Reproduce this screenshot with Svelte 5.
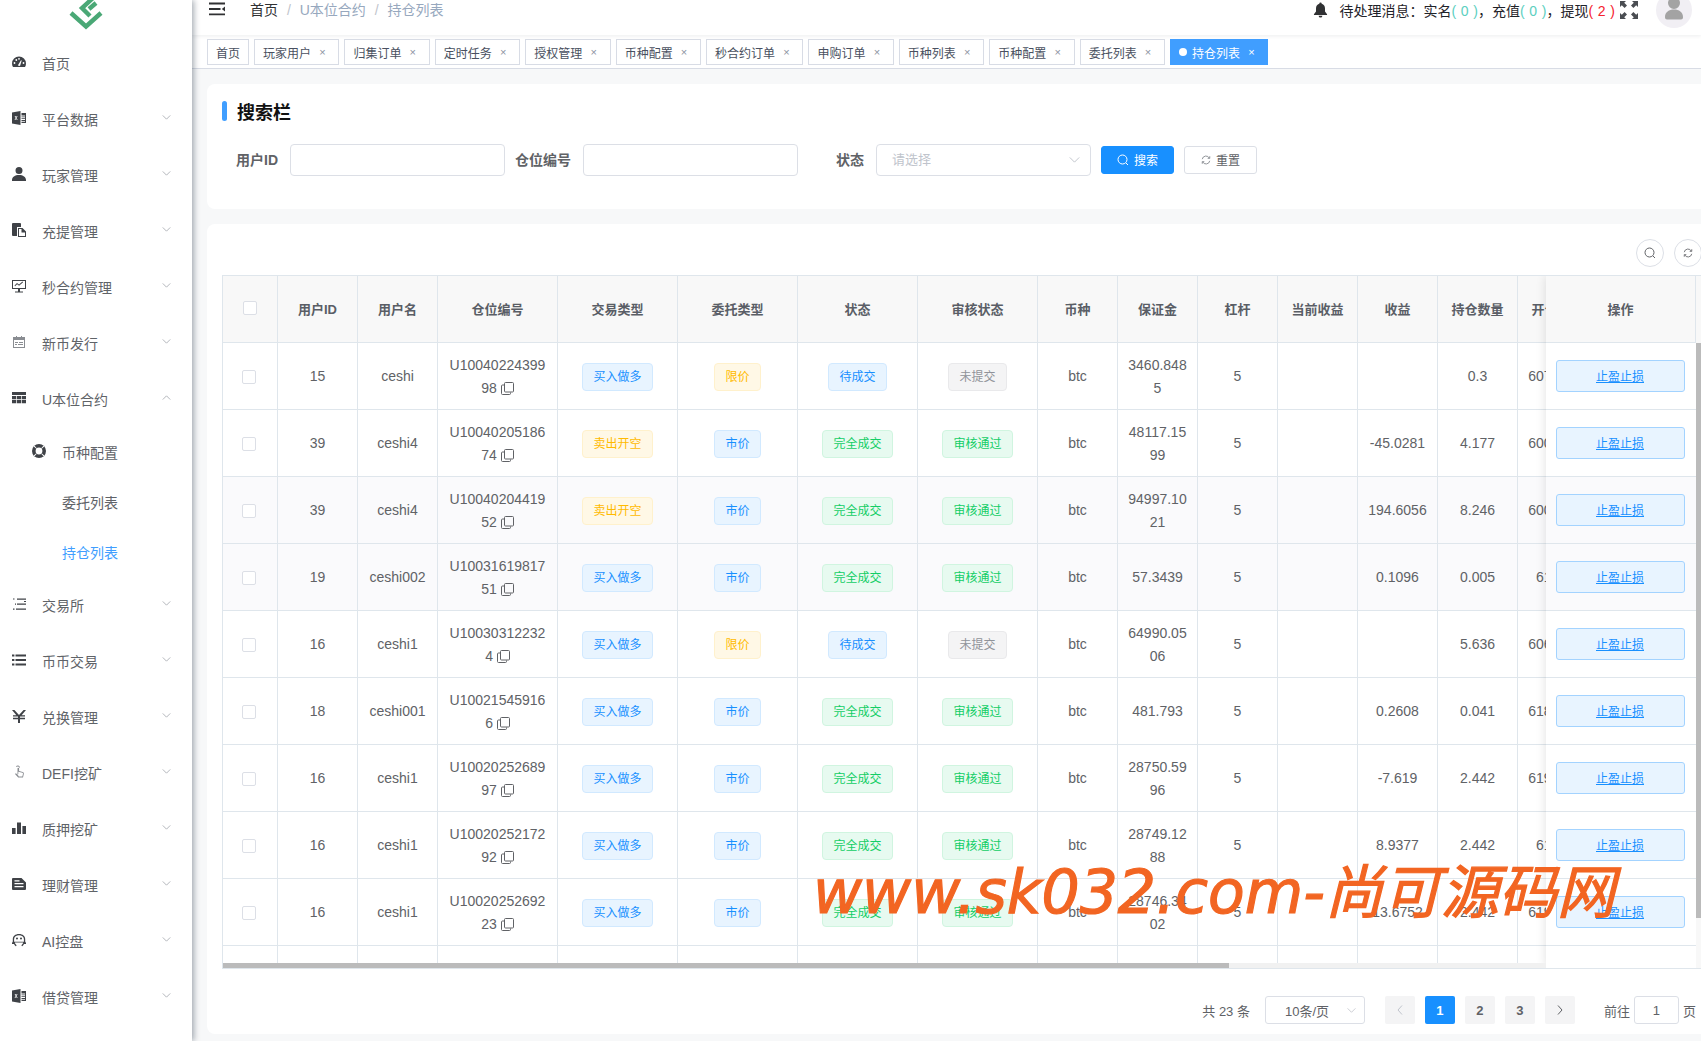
<script>
	// sidebar icons, all drawn on a 14x14 box
	const icons = {
		dash: 'M7 1.5A7 7 0 0 0 0 8.5c0 1.4.4 2.6 1 3.5h12c.6-.9 1-2.1 1-3.5a7 7 0 0 0-7-7zM1.6 8a.9.9 0 1 0 1.8 0a.9.9 0 1 0-1.8 0zM3.4 5a.9.9 0 1 0 1.8 0a.9.9 0 1 0-1.8 0zM6.1 3.8a.9.9 0 1 0 1.8 0a.9.9 0 1 0-1.8 0zM10.6 8a.9.9 0 1 0 1.8 0a.9.9 0 1 0-1.8 0zM5.8 10.5L9 5.2l.7.4L8 11z',
		excel: 'M0 1.5L8.5 0v14L0 12.5zM2.6 5l1.1 1.9-1.2 2.1h.9l.7-1.4.7 1.4h.9L4.500 6.900 5.600 5h-.9l-.6 1.300L3.500 5zM9.500 2H14v10H9.500v-1.200H13V9.900H9.500V9H13v-.9H9.500v-.9H13v-.9H9.500v-.9H13v-.9H9.500z',
		user: 'M3.5 3.5a3.5 3.5 0 1 0 7 0a3.5 3.5 0 1 0-7 0zM0 13c0-3 3-5 7-5s7 2 7 5v1H0z',
		paste: 'M0 1a1 1 0 0 1 1-1h7a1 1 0 0 1 1 1v3H5v9H1a1 1 0 0 1-1-1zM6 5h4.5L14 8.5V14H6zM7 6v7h6V9.5h-3.5V6z',
		board: 'M0 1h14v9H8v2.5h3v1H3v-1h3V10H0zM1 2v7h12V2zM2.5 6.5l2.5-2.5 2 1.5 3.5-3 .6.7-4 3.5-2-1.5-2 2z',
		calendar: 'M1 2h3V1h1v1h4V1h1v1h3v11H1zM2 5v7h10V5zM3 7h3v1H3zM7 7h4v1H7zM3 9h2v1H3zM6 9h5v1H6z',
		table: 'M0 1h14v3H0zM0 5h4.3v3.2H0zM5 5h4v3.2H5zM9.7 5H14v3.2H9.7zM0 9h4.3v3.2H0zM5 9h4v3.2H5zM9.7 9H14v3.2H9.7z',
		ring: 'M7 0a7 7 0 1 0 0 14a7 7 0 1 0 0-14zM7 3.6a3.4 3.4 0 1 1 0 6.8a3.4 3.4 0 1 1 0-6.8zM1.500 2.300L2.300 1.500 4.600 4 4 4.600zM12.500 2.300L11.700 1.500 9.400 4 10 4.600zM1.500 11.700L2.300 12.500 4.600 10 4 9.400zM12.500 11.700L11.700 12.500 9.400 10 10 9.400z',
		listDots: 'M1 1.5h1.5v1H1zM5 1.5h9v1.2H5zM5 6.5h9v1.2H5zM3 6.5h1v1.2H3zM1 11.5h1.5v1.2H1zM4 11.5h10v1.2H4zM12 4h2v1h-2z',
		list: 'M0 1.5h2.4v2H0zM3.5 1.5H14v2H3.5zM0 6h2.4v2H0zM3.5 6H14v2H3.5zM0 10.5h2.4v2H0zM3.5 10.5H14v2H3.5z',
		yen: 'M0 1h2.4L7 6l4.6-5H14L9.6 6.2H13v1.4H8v1.2h5v1.4H8V14H6v-3.8H1V8.8h5V7.6H1V6.2h3.4z',
		hand: 'M4 1.5a2.2 2.2 0 0 1 4 1l-.8.2a1.4 1.4 0 0 0-2.6-.6zM5.5 3.5a.8.8 0 0 1 1.6 0V6l3.6 1c.9.3 1.3 1 1.1 1.900L11 12.500H6.200L3 9l.8-.8 1.700 1.200zM6.300 4.300v5l-1.300-1 1.800 3.300h3.500l.7-2.900c.1-.5-.1-.8-.6-1L6.300 6.700z',
		bars: 'M0 7h3.6v6H0zM5 1.5h4V13H5zM10.4 5H14v8h-3.6z',
		file: 'M1 1h8.5L14 5.5V12a1 1 0 0 1-1 1H1a1 1 0 0 1-1-1V2a1 1 0 0 1 1-1zM2.5 6v1.3h9V6zM2.5 9v1.3h9V9zM2.5 3.2v1.3h5V3.2z',
		robot: 'M7 1C3.2 1 .8 3.200.8 6v2.500L0 10v1h2c.6 1.400 2 2.300 2 2.300l.6-1-1.700-2v-.9h8.200v.9l-1.700 2 .6 1s1.400-.9 2-2.300h2v-1l-.8-1.500V6C13.200 3.200 10.800 1 7 1zM2.100 8.800V6c0-2 2.200-3.700 4.900-3.700s4.900 1.700 4.900 3.700v2.800zM4 5.500a1 1 0 1 0 2 0a1 1 0 1 0-2 0zM8 5.500a1 1 0 1 0 2 0a1 1 0 1 0-2 0z'
	};

	const menu = [
		{ name: '首页', icon: 'dash', noArrow: true },
		{ name: '平台数据', icon: 'excel' },
		{ name: '玩家管理', icon: 'user' },
		{ name: '充提管理', icon: 'paste' },
		{ name: '秒合约管理', icon: 'board' },
		{ name: '新币发行', icon: 'calendar', light: true },
		{
			name: 'U本位合约',
			icon: 'table',
			open: true,
			children: [
				{ name: '币种配置', icon: 'ring' },
				{ name: '委托列表' },
				{ name: '持仓列表', active: true }
			]
		},
		{ name: '交易所', icon: 'listDots' },
		{ name: '币币交易', icon: 'list' },
		{ name: '兑换管理', icon: 'yen' },
		{ name: 'DEFI挖矿', icon: 'hand', light: true },
		{ name: '质押挖矿', icon: 'bars' },
		{ name: '理财管理', icon: 'file' },
		{ name: 'AI控盘', icon: 'robot' },
		{ name: '借贷管理', icon: 'excel' }
	];

	const tags = ['玩家用户', '归集订单', '定时任务', '授权管理', '币种配置', '秒合约订单', '申购订单', '币种列表', '币种配置', '委托列表'];

	const columns = [
		{ label: '用户ID', w: 80 },
		{ label: '用户名', w: 80 },
		{ label: '仓位编号', w: 120 },
		{ label: '交易类型', w: 120 },
		{ label: '委托类型', w: 120 },
		{ label: '状态', w: 120 },
		{ label: '审核状态', w: 120 },
		{ label: '币种', w: 80 },
		{ label: '保证金', w: 80 },
		{ label: '杠杆', w: 80 },
		{ label: '当前收益', w: 80 },
		{ label: '收益', w: 80 },
		{ label: '持仓数量', w: 80 },
		{ label: '开仓价格', w: 80 }
	];

	const buy = { text: '买入做多', kind: 'blue' };
	const sell = { text: '卖出开空', kind: 'orange' };
	const limit = { text: '限价', kind: 'orange' };
	const market = { text: '市价', kind: 'blue' };
	const pending = { text: '待成交', kind: 'blue' };
	const done = { text: '完全成交', kind: 'green' };
	const unsent = { text: '未提交', kind: 'gray' };
	const passed = { text: '审核通过', kind: 'green' };

	const rows = [
		{ uid: 15, name: 'ceshi', no: 'U1004022439998', side: buy, type: limit, state: pending, audit: unsent, margin: '3460.8485', gain: '', qty: '0.3', price: '60755.21' },
		{ uid: 39, name: 'ceshi4', no: 'U1004020518674', side: sell, type: market, state: done, audit: passed, margin: '48117.1599', gain: '-45.0281', qty: '4.177', price: '60012.34' },
		{ uid: 39, name: 'ceshi4', no: 'U1004020441952', side: sell, type: market, state: done, audit: passed, margin: '94997.1021', gain: '194.6056', qty: '8.246', price: '60043.12', tint: true },
		{ uid: 19, name: 'ceshi002', no: 'U1003161981751', side: buy, type: market, state: done, audit: passed, margin: '57.3439', gain: '0.1096', qty: '0.005', price: '6123.4', tint: true },
		{ uid: 16, name: 'ceshi1', no: 'U100303122324', side: buy, type: limit, state: pending, audit: unsent, margin: '64990.0506', gain: '', qty: '5.636', price: '60600.52' },
		{ uid: 18, name: 'ceshi001', no: 'U100215459166', side: buy, type: market, state: done, audit: passed, margin: '481.793', gain: '0.2608', qty: '0.041', price: '61824.73' },
		{ uid: 16, name: 'ceshi1', no: 'U1002025268997', side: buy, type: market, state: done, audit: passed, margin: '28750.5996', gain: '-7.619', qty: '2.442', price: '61943.91' },
		{ uid: 16, name: 'ceshi1', no: 'U1002025217292', side: buy, type: market, state: done, audit: passed, margin: '28749.1288', gain: '8.9377', qty: '2.442', price: '6193.9' },
		{ uid: 16, name: 'ceshi1', no: 'U1002025269223', side: buy, type: market, state: done, audit: passed, margin: '28746.3402', gain: '13.6752', qty: '2.442', price: '61936.24' },
		{ uid: 16, name: 'ceshi1', no: 'U1002025144412', side: buy, type: market, state: done, audit: passed, margin: '28770.4312', gain: '-100.343', qty: '2.442', price: '61922.47' }
	];
</script>

<div class="layout">
	<aside class="sidebar">
		<div class="logo">
			<svg width="36" height="30" viewBox="0 0 36 30">
				<g fill="none" stroke="#4aa876" stroke-width="4.4">
					<polyline points="3,13 18,26.5 33,13" />
					<polyline points="25,-2 14,8 22,16" />
					<polyline points="28,3 21,9" />
				</g>
			</svg>
		</div>
		{#each menu as item}
			<div class="menu-item">
				<svg class="menu-icon" class:light={item.light} viewBox="0 0 14 14"><path fill-rule="evenodd" d={icons[item.icon]} /></svg>
				<span>{item.name}</span>
				{#if !item.noArrow}
					<svg class="arrow" viewBox="0 0 10 6">
						<polyline points={item.open ? '0.5,5.5 5,1 9.5,5.5' : '0.5,0.5 5,5 9.5,0.5'} />
					</svg>
				{/if}
			</div>
			{#if item.children}
				{#each item.children as sub}
					<div class="sub-item" class:active={sub.active}>
						<span class="sub-slot">
							{#if sub.icon}
								<svg class="menu-icon" viewBox="0 0 14 14"><path fill-rule="evenodd" d={icons[sub.icon]} /></svg>
							{/if}
						</span>
						<span>{sub.name}</span>
					</div>
				{/each}
			{/if}
		{/each}
	</aside>

	<main class="main">
		<header class="navbar">
			<svg class="hamburger" viewBox="0 0 16 14">
				<path d="M0 .6h16v1.900H0zM0 6h11.500v1.900H0zM0 11.400h16v1.900H0zM16 4.500v5L12.800 7z" />
			</svg>
			<div class="crumbs">
				<span class="crumb-home">首页</span>
				<span class="sep">/</span>
				<span>U本位合约</span>
				<span class="sep">/</span>
				<span>持仓列表</span>
			</div>
			<div class="nav-right">
				<svg class="bell" viewBox="0 0 16 16">
					<path d="M8 0a1.3 1.3 0 0 1 1.3 1.3c2.3.6 3.5 2.5 3.5 5v3.2L15 12.4v.8H1v-.8l2.2-2.9V6.3c0-2.5 1.2-4.4 3.5-5A1.3 1.3 0 0 1 8 0zM6 14h4a2 2 0 0 1-4 0z" />
				</svg>
				<div class="notice">
					待处理消息：实名<span class="teal">( 0 )</span>，充值<span class="teal">( 0 )</span>，提现<span class="red">( 2 )</span>
				</div>
				<svg class="full" viewBox="0 0 18 18">
					<path d="M0 0h6L4.2 1.8 7 4.6 4.6 7 1.8 4.2 0 6zM18 0v6l-1.8-1.8L13.4 7 11 4.6l2.8-2.8L12 0zM0 18v-6l1.8 1.8L4.6 11 7 13.4l-2.8 2.8L6 18zM18 18h-6l1.8-1.8L11 13.4l2.4-2.4 2.8 2.8L18 12z" />
				</svg>
				<div class="avatar">
					<svg viewBox="0 0 36 36" width="36" height="36">
						<path fill="#a3a3a3" d="M12 11a6 6 0 1 0 12 0a6 6 0 1 0-12 0zM9 25c0-5 4-7.500 9-7.500s9 2.500 9 7.500v.5a2 2 0 0 1-2 2H11a2 2 0 0 1-2-2z" />
					</svg>
				</div>
			</div>
		</header>

		<div class="tags">
			<span class="tag">首页</span>
			{#each tags as t}
				<span class="tag">{t}<i class="close">×</i></span>
			{/each}
			<span class="tag current"><b class="dot"></b>持仓列表<i class="close">×</i></span>
		</div>

		<div class="content">
			<section class="card search">
				<h3 class="title">搜索栏</h3>
				<div class="form">
					<label class="field">
						<span class="label">用户ID</span>
						<span class="input"></span>
					</label>
					<label class="field">
						<span class="label">仓位编号</span>
						<span class="input"></span>
					</label>
					<label class="field">
						<span class="label">状态</span>
						<span class="input select">
							<span class="placeholder">请选择</span>
							<svg class="caret" viewBox="0 0 12 7"><polyline points="0.5,0.5 6,6 11.5,0.5" /></svg>
						</span>
					</label>
					<button class="btn primary">
						<svg class="btn-icon" viewBox="0 0 12 12"><circle cx="5.5" cy="5.5" r="4.5" /><line x1="9" y1="9" x2="11" y2="11" /></svg>
						搜索
					</button>
					<button class="btn">
						<svg class="btn-icon small" viewBox="0 0 12 12"><path d="M1.500 5A4.500 4.500 0 0 1 10 3.800M10.500 7A4.500 4.500 0 0 1 2 8.200" /><path d="M10.500 1.500V4H8M1.500 10.500V8H4" /></svg>
						重置
					</button>
				</div>
			</section>

			<section class="card list">
				<div class="toolbar">
					<span class="round">
						<svg class="btn-icon dark" viewBox="0 0 12 12"><circle cx="5.5" cy="5.500" r="4.500" /><line x1="9" y1="9" x2="11" y2="11" /></svg>
					</span>
					<span class="round">
						<svg class="btn-icon dark small" viewBox="0 0 12 12"><path d="M1.500 5A4.500 4.500 0 0 1 10 3.800M10.500 7A4.500 4.500 0 0 1 2 8.200" /><path d="M10.500 1.500V4H8M1.500 10.500V8H4" /></svg>
					</span>
				</div>

				<div class="table-wrap">
					<table>
						<colgroup>
							<col style="width: 55px" />
							{#each columns as c}
								<col style="width: {c.w}px" />
							{/each}
							<col style="width: 150px" />
						</colgroup>
						<thead>
							<tr>
								<th><span class="check head"></span></th>
								{#each columns as c}
									<th>{c.label}</th>
								{/each}
								<th></th>
							</tr>
						</thead>
						<tbody>
							{#each rows as r}
								<tr class:tint={r.tint}>
									<td><span class="check"></span></td>
									<td>{r.uid}</td>
									<td>{r.name}</td>
									<td class="wrap">
										{r.no}
										<svg class="copy" viewBox="0 0 13 13">
											<rect x="3.500" y="0.500" width="9" height="9.500" rx="1" />
											<path d="M3 3H1.500a1 1 0 0 0-1 1v7.500a1 1 0 0 0 1 1h7a1 1 0 0 0 1-1V10.500" />
										</svg>
									</td>
									<td><span class="pill {r.side.kind}">{r.side.text}</span></td>
									<td><span class="pill {r.type.kind}">{r.type.text}</span></td>
									<td><span class="pill {r.state.kind}">{r.state.text}</span></td>
									<td><span class="pill {r.audit.kind}">{r.audit.text}</span></td>
									<td>btc</td>
									<td class="wrap">{r.margin}</td>
									<td>5</td>
									<td></td>
									<td>{r.gain}</td>
									<td>{r.qty}</td>
									<td class="wrap">{r.price}</td>
									<td></td>
								</tr>
							{/each}
						</tbody>
					</table>

					<div class="fixed-col">
						<div class="fixed-head">操作</div>
						{#each rows as r}
							<div class="fixed-row" class:tint={r.tint}>
								<button class="stop">止盈止损</button>
							</div>
						{/each}
					</div>

					<div class="gutter"><div class="v-thumb"></div></div>
					<div class="h-track"><div class="h-thumb"></div></div>
				</div>

				<div class="pager">
					<span class="total">共 23 条</span>
					<span class="size">10条/页
						<svg class="caret small" viewBox="0 0 12 7"><polyline points="0.5,0.5 6,6 11.5,0.5" /></svg>
					</span>
					<span class="page-btn off">
						<svg class="page-arrow" viewBox="0 0 6 10"><polyline points="5,0.5 1,5 5,9.500" /></svg>
					</span>
					<span class="page-btn on">1</span>
					<span class="page-btn">2</span>
					<span class="page-btn">3</span>
					<span class="page-btn">
						<svg class="page-arrow" viewBox="0 0 6 10"><polyline points="1,0.5 5,5 1,9.500" /></svg>
					</span>
					<span class="jump">前往</span>
					<span class="jump-input">1</span>
					<span class="jump-end">页</span>
				</div>
			</section>
		</div>
	</main>

	<div class="watermark">www.sk032.com-<span class="wm-cn">尚可源码网</span></div>
</div>

<style>
	:global(body) {
		margin: 0;
		background: #f7f8f9;
	}

	.layout {
		display: flex;
		position: relative;
		width: 100%;
		height: 1041px;
		overflow: hidden;
		font-family: 'Liberation Sans', 'Noto Sans CJK SC', sans-serif;
		font-size: 14px;
		color: #606266;
	}

	/* sidebar */
	.sidebar {
		flex: 0 0 192px;
		background: #fff;
		box-shadow: 2px 0 6px rgba(0, 21, 41, 0.35);
		position: relative;
		z-index: 3;
	}

	.logo {
		height: 35px;
		display: flex;
		justify-content: center;
		align-items: flex-start;
		overflow: hidden;
		margin-left: -20px;
	}

	.menu-item {
		height: 56px;
		display: flex;
		align-items: center;
		padding: 0 21px 0 12px;
		color: #5f6368;
	}

	.menu-icon {
		width: 14px;
		height: 14px;
		flex: none;
		margin: -2px 16px 0 0;
		fill: #3f4247;
	}

	.menu-icon.light {
		fill: #8a8d92;
	}

	.arrow {
		width: 9px;
		height: 5px;
		margin: -4px 0 0 auto;
		fill: none;
		stroke: #a4a7ad;
		stroke-width: 1;
	}

	.sub-item {
		height: 50px;
		display: flex;
		align-items: center;
		padding-left: 32px;
		color: #5f6368;
	}

	.sub-slot {
		width: 30px;
		display: flex;
	}

	.sub-item.active {
		color: #409eff;
	}

	/* top bar */
	.main {
		flex: 1;
		min-width: 0;
		overflow: hidden;
	}

	.navbar {
		height: 35px;
		display: flex;
		align-items: flex-start;
		padding: 0 9px 0 17px;
		background: #fff;
		box-shadow: 0 1px 4px rgba(0, 21, 41, 0.08);
		position: relative;
		z-index: 1;
		overflow: hidden;
	}

	.hamburger {
		width: 16px;
		height: 14px;
		margin-top: 2px;
		fill: #303133;
	}

	.crumbs {
		margin-left: 25px;
		line-height: 20px;
		color: #97a8be;
	}

	.crumb-home {
		color: #303133;
	}

	.sep {
		margin: 0 5px;
		color: #c0c4cc;
	}

	.nav-right {
		margin-left: auto;
		display: flex;
		align-items: flex-start;
	}

	.bell {
		width: 15px;
		height: 16px;
		margin-top: 2px;
		fill: #303133;
	}

	.notice {
		margin-left: 12px;
		line-height: 22px;
		color: #1f2329;
		white-space: nowrap;
	}

	.teal,
	.red {
		word-spacing: 0.8px;
	}

	.teal {
		color: #5ccfc0;
	}

	.red {
		color: #f5222d;
	}

	.full {
		width: 18px;
		height: 18px;
		margin: 1px 0 0 5px;
		fill: #4a4d52;
	}

	.avatar {
		width: 36px;
		height: 36px;
		margin: -8px 0 0 18px;
		border-radius: 50%;
		background: #f1eff4;
	}

	/* tag strip */
	.tags {
		height: 34px;
		box-sizing: border-box;
		display: flex;
		gap: 5px;
		padding: 4px 0 0 15px;
		background: #fff;
		border-bottom: 1px solid #d8dce5;
		white-space: nowrap;
	}

	.tag {
		height: 26px;
		box-sizing: border-box;
		display: flex;
		align-items: center;
		padding: 0 8px;
		border: 1px solid #d8dce5;
		font-size: 12px;
		color: #495060;
	}

	.close {
		width: 16px;
		margin-left: 3.4px;
		text-align: center;
		font-style: normal;
		font-size: 11px;
		color: #8c93a1;
	}

	.tag.current {
		background: #409eff;
		border-color: #409eff;
		color: #fff;
	}

	.tag.current .close {
		color: #fff;
	}

	.dot {
		width: 8px;
		height: 8px;
		margin-right: 5px;
		border-radius: 50%;
		background: #fff;
	}

	/* page */
	.content {
		width: 1525px;
		box-sizing: border-box;
		padding: 15px 0 0 15px;
		display: flex;
		flex-direction: column;
		gap: 15px;
	}

	.card {
		background: #fff;
		border-radius: 8px;
		padding: 0 15px;
	}

	.search {
		height: 125px;
		box-sizing: border-box;
		padding-top: 17px;
	}

	.title {
		margin: 0;
		height: 20px;
		display: flex;
		align-items: center;
		padding-left: 15px;
		position: relative;
		font-size: 18px;
		font-weight: 700;
		color: #111;
	}

	.title::before {
		content: '';
		position: absolute;
		left: 0;
		top: 0;
		width: 5px;
		height: 20px;
		border-radius: 3px;
		background: #409eff;
	}

	.form {
		display: flex;
		align-items: center;
		gap: 10px;
		margin-top: 23px;
	}

	.field {
		display: flex;
		align-items: center;
	}

	.label {
		width: 68px;
		box-sizing: border-box;
		padding: 0 12px 2px 0;
		text-align: right;
		font-weight: 700;
		color: #606266;
		white-space: nowrap;
	}

	.input {
		width: 215px;
		height: 32px;
		box-sizing: border-box;
		border: 1px solid #dcdfe6;
		border-radius: 4px;
		background: #fff;
	}

	.select {
		display: flex;
		align-items: center;
		justify-content: space-between;
		padding: 0 10px 0 15px;
	}

	.placeholder {
		padding-bottom: 3px;
		font-size: 13px;
		color: #c0c4cc;
	}

	.caret {
		width: 11px;
		height: 6px;
		fill: none;
		stroke: #b8bcc4;
	}

	.btn {
		width: 73px;
		height: 28px;
		display: flex;
		align-items: center;
		justify-content: center;
		gap: 5px;
		padding: 0 0 1px;
		border: 1px solid #dcdfe6;
		border-radius: 3px;
		background: #fff;
		font: inherit;
		font-size: 12px;
		color: #606266;
	}

	.btn.primary {
		background: #1890ff;
		border-color: #1890ff;
		color: #fff;
	}

	.btn-icon {
		width: 12px;
		height: 12px;
		fill: none;
		stroke: currentColor;
		stroke-width: 1;
	}

	.btn-icon.small {
		width: 10px;
		height: 10px;
		color: #7d8187;
	}

	.btn-icon.dark {
		color: #606266;
	}

	/* table */
	.list {
		height: 810px;
		box-sizing: border-box;
		padding-top: 15px;
	}

	.toolbar {
		display: flex;
		justify-content: flex-end;
		gap: 10px;
		height: 28px;
		margin-bottom: 8px;
	}

	.round {
		width: 28px;
		height: 28px;
		box-sizing: border-box;
		display: flex;
		align-items: center;
		justify-content: center;
		border: 1px solid #dcdfe6;
		border-radius: 50%;
	}

	.table-wrap {
		position: relative;
		height: 694px;
		overflow: hidden;
		box-sizing: border-box;
		border-top: 1px solid #dfe6ec;
		border-left: 1px solid #dfe6ec;
		border-bottom: 1px solid #dfe6ec;
	}

	table {
		width: 1525px;
		table-layout: fixed;
		border-collapse: separate;
		border-spacing: 0;
	}

	th,
	td {
		height: 67px;
		box-sizing: border-box;
		padding: 0 10px;
		border-right: 1px solid #dfe6ec;
		border-bottom: 1px solid #dfe6ec;
		text-align: center;
		overflow: hidden;
	}

	th {
		padding-bottom: 2px;
		background: #f8f8f8;
		font-size: 13px;
		font-weight: 700;
		color: #5a5e66;
	}

	td {
		padding-top: 1px;
		line-height: 23px;
		color: #606266;
	}

	.wrap {
		word-break: break-all;
	}

	tr.tint td,
	.fixed-row.tint {
		background: #fafafc;
	}

	.check {
		display: block;
		width: 14px;
		height: 14px;
		box-sizing: border-box;
		margin: 0 0 0 9px;
		border: 1px solid #dcdfe6;
		border-radius: 2px;
		background: #fff;
	}

	.check.head {
		margin-left: 10px;
	}

	.copy {
		width: 13px;
		height: 13px;
		vertical-align: -2px;
		fill: none;
		stroke: #606266;
		stroke-width: 1;
	}

	.pill {
		display: inline-block;
		height: 28px;
		box-sizing: border-box;
		padding: 0 10px;
		border: 1px solid;
		border-radius: 4px;
		font-size: 12px;
		line-height: 26px;
		white-space: nowrap;
	}

	.blue {
		background: #e8f4ff;
		border-color: #d1e9ff;
		color: #1890ff;
	}

	.orange {
		background: #fff8e6;
		border-color: #fff1cc;
		color: #ffba00;
	}

	.green {
		background: #e7faf0;
		border-color: #d0f5e0;
		color: #13ce66;
	}

	.gray {
		background: #f4f4f5;
		border-color: #e9e9eb;
		color: #909399;
	}

	/* right pinned column, scrollbars sit over the table */
	.fixed-col {
		position: absolute;
		top: 0;
		right: 6px;
		width: 150px;
		height: 100%;
		overflow: hidden;
		background: #fff;
		box-shadow: 0 0 10px rgba(0, 0, 0, 0.12);
	}

	.fixed-col::after {
		content: '';
		position: absolute;
		left: 0;
		right: 0;
		bottom: 0;
		height: 5px;
		background: #fff;
	}

	.fixed-head {
		height: 67px;
		box-sizing: border-box;
		display: flex;
		align-items: center;
		justify-content: center;
		padding-bottom: 2px;
		background: #f8f8f8;
		border-bottom: 1px solid #dfe6ec;
		border-right: 1px solid #dfe6ec;
		font-size: 13px;
		font-weight: 700;
		color: #5a5e66;
	}

	.fixed-row {
		height: 67px;
		box-sizing: border-box;
		display: flex;
		align-items: center;
		justify-content: center;
		padding-right: 2px;
		border-bottom: 1px solid #dfe6ec;
	}

	.stop {
		width: 129px;
		height: 32px;
		padding: 0 0 2px;
		border: 1px solid #a3d3ff;
		border-radius: 3px;
		background: #e8f4ff;
		font: inherit;
		font-size: 12px;
		color: #1890ff;
		text-decoration: underline;
	}

	.gutter {
		position: absolute;
		top: 0;
		right: 0;
		bottom: 0;
		width: 6px;
		padding-top: 67px;
		box-sizing: border-box;
		background: #f8f8f8;
	}

	.v-thumb {
		height: 575px;
		background: #bbb;
	}

	.h-track {
		position: absolute;
		left: 0;
		right: 156px;
		bottom: 0;
		height: 5px;
		background: #f1f1f1;
	}

	.h-thumb {
		width: 1006px;
		height: 5px;
		background: #bbb;
	}

	/* pagination */
	.pager {
		display: flex;
		align-items: center;
		justify-content: flex-end;
		height: 28px;
		margin-top: 27px;
		padding-right: 6px;
		font-size: 13px;
		color: #606266;
	}

	.size {
		width: 100px;
		height: 28px;
		box-sizing: border-box;
		display: flex;
		align-items: center;
		justify-content: space-between;
		margin: 0 20px 0 15px;
		padding: 0 8px 0 19px;
		border: 1px solid #dcdfe6;
		border-radius: 3px;
	}

	.caret.small {
		width: 9px;
		height: 5px;
	}

	.page-btn {
		width: 30px;
		height: 28px;
		margin-right: 10px;
		display: flex;
		align-items: center;
		justify-content: center;
		border-radius: 2px;
		background: #f4f4f5;
		font-weight: 700;
		color: #606266;
	}

	.page-btn.on {
		background: #1890ff;
		color: #fff;
	}

	.page-arrow {
		width: 6px;
		height: 10px;
		fill: none;
		stroke: #606266;
	}

	.off .page-arrow {
		stroke: #c0c4cc;
	}

	.jump {
		margin-left: 19px;
	}

	.jump-input {
		width: 45px;
		height: 28px;
		box-sizing: border-box;
		display: flex;
		align-items: center;
		justify-content: center;
		margin: 0 4px;
		border: 1px solid #dcdfe6;
		border-radius: 3px;
	}

	/* site stamp burned over the screenshot */
	.watermark {
		position: absolute;
		left: 813px;
		top: 850px;
		z-index: 5;
		font-family: 'DejaVu Sans', 'Noto Sans CJK SC', sans-serif;
		font-style: italic;
		font-size: 60px;
		line-height: 84px;
		color: #f26522;
		-webkit-text-stroke: 1.2px #f26522;
		white-space: nowrap;
	}

	.wm-cn {
		font-size: 58px;
	}
</style>
